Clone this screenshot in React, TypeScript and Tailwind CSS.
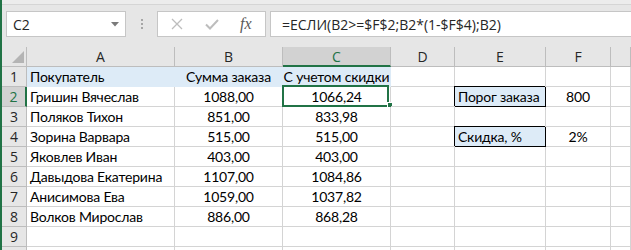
import React from "react";

type Cell = { t?: string; align?: "l" | "c"; fill?: boolean; box?: boolean; sel?: boolean };

const rows: Cell[][] = [
  [
    { t: "Покупатель", align: "l", fill: true },
    { t: "Сумма заказа", align: "c", fill: true },
    { t: "С учетом скидки", align: "c", fill: true },
    {},
    {},
    {},
    {},
  ],
  [
    { t: "Гришин Вячеслав", align: "l" },
    { t: "1088,00", align: "c" },
    { t: "1066,24", align: "c", sel: true },
    {},
    { t: "Порог заказа", align: "l", fill: true, box: true },
    { t: "800", align: "c" },
    {},
  ],
  [
    { t: "Поляков Тихон", align: "l" },
    { t: "851,00", align: "c" },
    { t: "833,98", align: "c" },
    {},
    {},
    {},
    {},
  ],
  [
    { t: "Зорина Варвара", align: "l" },
    { t: "515,00", align: "c" },
    { t: "515,00", align: "c" },
    {},
    { t: "Скидка, %", align: "l", fill: true, box: true },
    { t: "2%", align: "c" },
    {},
  ],
  [
    { t: "Яковлев Иван", align: "l" },
    { t: "403,00", align: "c" },
    { t: "403,00", align: "c" },
    {},
    {},
    {},
    {},
  ],
  [
    { t: "Давыдова Екатерина", align: "l" },
    { t: "1107,00", align: "c" },
    { t: "1084,86", align: "c" },
    {},
    {},
    {},
    {},
  ],
  [
    { t: "Анисимова Ева", align: "l" },
    { t: "1059,00", align: "c" },
    { t: "1037,82", align: "c" },
    {},
    {},
    {},
    {},
  ],
  [
    { t: "Волков Мирослав", align: "l" },
    { t: "886,00", align: "c" },
    { t: "868,28", align: "c" },
    {},
    {},
    {},
    {},
  ],
  [{}, {}, {}, {}, {}, {}, {}],
  [{}, {}, {}, {}, {}, {}, {}],
];

const cols = ["A", "B", "C", "D", "E", "F", ""];

export default function App() {
  return (
    <div
      className="w-[631px] h-[250px] overflow-hidden bg-[#e6e6e6] border-l-2 border-[#217346] flex flex-col"
      style={{ fontFamily: "Lato, sans-serif" }}
    >
      {/* ribbon bottom strip */}
      <div className="h-[5px] shrink-0 bg-[#ececec] border-b border-[#d5d5d5]" />
      {/* formula bar */}
      <div className="h-[42px] shrink-0 flex items-start pt-[6px] pl-[4px]">
        <div className="w-[120px] h-[26px] bg-white border border-[#c6c6c6] flex items-center pl-[6px] pr-[6px]">
          <span className="text-[14px] text-[#262626] flex-1 font-['Open_Sans',sans-serif]">C2</span>
          <svg width="8" height="5" viewBox="0 0 8 5">
            <path d="M0 0 L8 0 L4 4.5 Z" fill="#7a7a7a" />
          </svg>
        </div>
        <div className="w-[31px] h-[26px] flex flex-col items-center justify-center gap-[2px]">
          <div className="w-[2px] h-[2px] bg-[#a6a6a6]" />
          <div className="w-[2px] h-[2px] bg-[#a6a6a6]" />
          <div className="w-[2px] h-[2px] bg-[#a6a6a6]" />
        </div>
        <div className="w-[109px] h-[26px] bg-white border border-[#c6c6c6] flex items-center">
          <svg width="12" height="12" viewBox="0 0 12 12" className="ml-[13px]">
            <path d="M1 1 L11 11 M11 1 L1 11" stroke="#bdbdbd" strokeWidth="1.3" />
          </svg>
          <svg width="14" height="11" viewBox="0 0 14 11" className="ml-[22px]">
            <path d="M1 5.5 L5 9.5 L13 1" stroke="#bdbdbd" strokeWidth="2" fill="none" />
          </svg>
          <span className="ml-[21px] text-[#595959] italic text-[16px] font-['Liberation_Serif',serif]">fx</span>
        </div>
        <div className="ml-[4px] flex-1 h-[26px] bg-white border border-r-0 border-[#c6c6c6] flex items-center pl-[11px]">
          <span className="text-[#262626] whitespace-nowrap text-[14px] font-['Open_Sans',sans-serif]">
            =ЕСЛИ(B2&gt;=$F$2;B2*(1-$F$4);B2)
          </span>
        </div>
      </div>
      {/* grid */}
      <div className="grid grid-cols-[25px_148px_108px_108px_64px_91px_65px_1fr] auto-rows-[20px] bg-white">
        {/* header row */}
        <div className="bg-[#e6e6e6] border-r border-b border-[#bdbdbd] relative">
          <svg width="12" height="12" viewBox="0 0 12 12" className="absolute left-[10px] bottom-[3px]">
            <path d="M12 0 L12 12 L0 12 Z" fill="#b4b4b4" />
          </svg>
        </div>
        {cols.map((c, i) => (
          <div
            key={c + i}
            className={
              c === "C"
                ? "bg-[#d2d2d2] border-r border-[#bdbdbd] border-b-2 border-b-[#217346] flex items-center justify-center text-[#217346] text-[14px] font-['Open_Sans',sans-serif]"
                : "bg-[#e6e6e6] border-r border-b border-[#bdbdbd] flex items-center justify-center text-[#262626] text-[14px] font-['Open_Sans',sans-serif]"
            }
          >
            {c}
          </div>
        ))}
        {rows.map((r, ri) => (
          <React.Fragment key={ri}>
            <div
              className={
                ri === 1
                  ? "bg-[#d2d2d2] border-r-2 border-r-[#217346] border-b border-[#bdbdbd] flex items-center justify-center text-[#217346] text-[14px] font-['Open_Sans',sans-serif]"
                  : "bg-[#e6e6e6] border-r border-b border-[#bdbdbd] flex items-center justify-center text-[#262626] text-[14px] font-['Open_Sans',sans-serif]"
              }
            >
              {ri < 9 ? ri + 1 : ""}
            </div>
            {r.map((c, ci) => {
              let cls =
                "relative flex items-center whitespace-nowrap text-[14px] tracking-[-0.2px] text-black border-r border-b ";
              if (c.box) {
                cls += "bg-[#ddebf7] border-black shadow-[-1px_-1px_0_0_#000] ";
              } else if (c.fill) {
                cls += "bg-[#ddebf7] border-[#ddebf7] ";
              } else {
                cls += "border-[#d4d4d4] ";
              }
              cls += c.align === "c" ? "justify-center" : "pl-[3px]";
              return (
                <div key={ci} className={cls}>
                  {c.t}
                  {c.sel && (
                    <>
                      <div className="absolute -left-px -top-[2px] w-[107px] h-[22px] border-2 border-[#217346]" />
                      <div className="absolute left-[104px] top-[15px] w-[6px] h-[6px] bg-[#217346] border border-white" />
                    </>
                  )}
                </div>
              );
            })}
          </React.Fragment>
        ))}
      </div>
    </div>
  );
}
